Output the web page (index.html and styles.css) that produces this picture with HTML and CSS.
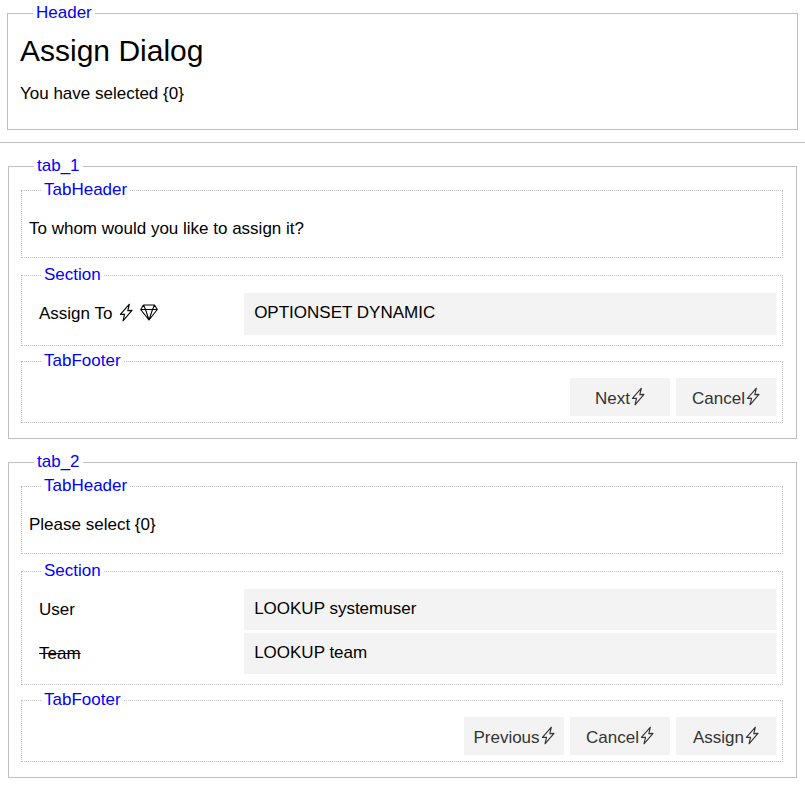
FILE: index.html
```html
<!DOCTYPE html>
<html lang="en">
<head>
<meta charset="utf-8">
<title>Assign Dialog</title>
<link rel="stylesheet" href="styles.css">
</head>
<body>
<svg class="sprite" aria-hidden="true">
  <symbol id="bolt" viewBox="0 0 14 19">
    <path d="M10.4 1.2 L1.4 11.4 L5.6 11.2 L4 17.8 L13 7.4 L8.8 7.6 Z"/>
  </symbol>
  <symbol id="gem" viewBox="0 0 18 17">
    <path d="M3.5 1 H14.5 L17.3 5.5 L9 16 L.7 5.5 Z M.7 5.5 H17.3 M3.5 1 L5.5 5.5 L9 16 L12.5 5.5 L14.5 1"/>
  </symbol>
</svg>

<header>
  <fieldset class="box header-box">
    <legend>Header</legend>
    <h1>Assign Dialog</h1>
    <p>You have selected {0}</p>
  </fieldset>
</header>
<hr>
<main>
  <fieldset class="box tab">
    <legend>tab_1</legend>
    <fieldset class="part tab-header">
      <legend>TabHeader</legend>
      <p>To whom would you like to assign it?</p>
    </fieldset>
    <fieldset class="part section">
      <legend>Section</legend>
      <div class="field">
        <label class="with-icons" for="assign-to">Assign To
          <svg class="icon bolt"><use href="#bolt"/></svg>
          <svg class="icon gem"><use href="#gem"/></svg>
        </label>
        <input id="assign-to" type="text" value="OPTIONSET DYNAMIC" readonly>
      </div>
    </fieldset>
    <fieldset class="part tab-footer">
      <legend>TabFooter</legend>
      <div class="actions">
        <button type="button">Next<svg class="icon bolt"><use href="#bolt"/></svg></button>
        <button type="button">Cancel<svg class="icon bolt"><use href="#bolt"/></svg></button>
      </div>
    </fieldset>
  </fieldset>

  <fieldset class="box tab">
    <legend>tab_2</legend>
    <fieldset class="part tab-header">
      <legend>TabHeader</legend>
      <p>Please select {0}</p>
    </fieldset>
    <fieldset class="part section">
      <legend>Section</legend>
      <div class="field">
        <label for="user">User</label>
        <input id="user" type="text" value="LOOKUP systemuser" readonly>
      </div>
      <div class="field">
        <label class="hidden-field" for="team">Team</label>
        <input id="team" type="text" value="LOOKUP team" readonly>
      </div>
    </fieldset>
    <fieldset class="part tab-footer">
      <legend>TabFooter</legend>
      <div class="actions">
        <button type="button">Previous<svg class="icon bolt"><use href="#bolt"/></svg></button>
        <button type="button">Cancel<svg class="icon bolt"><use href="#bolt"/></svg></button>
        <button type="button">Assign<svg class="icon bolt"><use href="#bolt"/></svg></button>
      </div>
    </fieldset>
  </fieldset>
</main>
</body>
</html>
```
FILE: styles.css
```css
* { box-sizing: border-box; }

body {
  margin: 0;
  padding-top: 3px;
  background: #fff;
  color: #000;
  font: 17px/20px "Liberation Sans", Arial, sans-serif;
}

.sprite { display: none; }

fieldset {
  min-width: 0;
  margin: 0;
  border: 1px solid #bfbfbf;
}

legend {
  padding: 0 3px 2px;
  color: #00f;
  line-height: 19px;
}

h1, p { margin: 0; }

h1 {
  margin-bottom: 15px;
  font-size: 30px;
  font-weight: 400;
  line-height: 36px;
}

hr {
  margin: 12px 0 13px;
  border: 0;
  border-top: 1px solid #bfbfbf;
}

.box > legend { margin-left: 13px; }

.header-box {
  margin: 0 7px;
  padding: 9px 12px 25px;
}

.tab {
  margin: 0 8px 13px;
  padding: 3px 13px 15px 12px;
}

.part {
  padding: 6px 6px 6px 7px;
  border-style: dotted;
}

.part > legend { margin-left: 12px; }

.tab-header {
  margin-bottom: 7px;
  padding-top: 18px;
  padding-bottom: 18px;
}

.section {
  display: grid;
  gap: 3px;
  margin-bottom: 5px;
  padding-top: 7px;
  padding-bottom: 10px;
}

.field {
  display: grid;
  grid-template-columns: 36fr 89fr;
}

.field label {
  display: flex;
  align-items: center;
  min-height: 41px;
  padding-left: 10px;
}

.field .with-icons {
  gap: 7px;
  min-height: 42px;
}

.hidden-field { text-decoration: line-through; }

.field input {
  width: 100%;
  min-width: 0;
  padding: 0 10px 2px;
  border: 0;
  border-radius: 0;
  background: #f3f3f3;
  color: inherit;
  font: inherit;
}

.actions {
  display: flex;
  justify-content: flex-end;
  gap: 6px;
}

button {
  display: flex;
  align-items: center;
  justify-content: center;
  width: 100px;
  height: 38px;
  padding: 3px 0 0;
  border: 0;
  background: #f3f3f3;
  color: #333;
  font: inherit;
}

.icon {
  flex: none;
  fill: none;
  stroke: currentColor;
  stroke-width: 1.1;
  stroke-linejoin: round;
}

.bolt {
  width: 14px;
  height: 19px;
  margin-bottom: 4px;
}

.gem {
  width: 18px;
  height: 17px;
  margin-bottom: 4px;
}

button .icon { margin-left: 1px; }
```
